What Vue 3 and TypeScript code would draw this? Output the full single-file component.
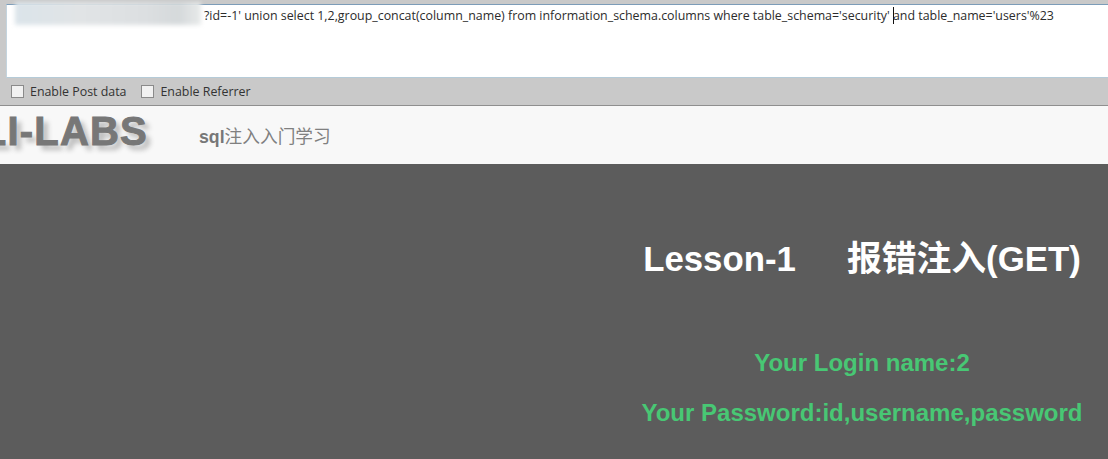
<script setup lang="ts">
const url = "?id=-1' union select 1,2,group_concat(column_name) from information_schema.columns where table_schema='security' "
const urlEnd = "and table_name='users'%23"
const options = ['Enable Post data', 'Enable Referrer']
</script>

<template>
  <div class="page">
    <div class="toolbar">
      <div class="url-box">
        <span class="url-text">{{ url }}<span class="caret"></span>{{ urlEnd }}</span>
        <div class="smudge"></div>
      </div>
      <div class="option-row">
        <label v-for="item in options" :key="item" class="option">
          <span class="check"></span>
          {{ item }}
        </label>
      </div>
    </div>
    <nav class="navbar">
      <div class="logo-clip"><span class="logo">SQLI-LABS</span></div>
      <div class="nav-title"><b>sql</b>注入入门学习</div>
    </nav>
    <main class="content">
      <section class="lesson">
        <h1>Lesson-1<span class="title-gap"></span>报错注入(GET)</h1>
        <p class="login-line">Your Login name:2</p>
        <p class="pass-line">Your Password:id,username,password</p>
      </section>
    </main>
  </div>
</template>

<style scoped>
.page {
  display: flex;
  flex-direction: column;
  width: 1108px;
  height: 459px;
  overflow: hidden;
  background: #5c5c5c;
  font-family: "Liberation Sans", "Noto Sans CJK SC", sans-serif;
}

.toolbar {
  height: 106px;
  padding-top: 4px;
  box-sizing: border-box;
  background: #c9c9c9;
  border-bottom: 1px solid #8f8f8f;
}

.url-box {
  position: relative;
  height: 74px;
  margin-left: 6px;
  padding: 1px 0 0 197px;
  box-sizing: border-box;
  background: #fff;
  border-top: 1px solid #7c9cb8;
  border-bottom: 1px solid #b5cbd8;
  border-left: 1px solid #c4d4de;
}

.url-text {
  font-family: "Open Sans", sans-serif;
  font-size: 12.4px;
  line-height: 18px;
  color: #2c2c2c;
  white-space: pre;
}

.caret {
  display: inline-block;
  width: 1px;
  height: 17px;
  margin-right: -1px;
  vertical-align: -4px;
  background: #111;
}

.smudge {
  position: absolute;
  top: -3px;
  left: 8px;
  width: 186px;
  height: 23px;
  background: linear-gradient(90deg, #dbe4ea 0%, #e1e4e6 35%, #dcdfe1 70%, #d5d9db 88%, #e8eaea 100%);
  filter: blur(2px);
}

.option-row {
  display: flex;
  gap: 15px;
  height: 27px;
  padding-left: 11px;
  align-items: center;
}

.option {
  display: flex;
  align-items: center;
  gap: 6px;
  font-family: "Open Sans", sans-serif;
  font-size: 12.4px;
  color: #333;
}

.check {
  width: 11px;
  height: 11px;
  background: #f1f1f1;
  border: 1px solid #8a8a8a;
}

.navbar {
  display: flex;
  align-items: center;
  height: 58px;
  background: #f8f8f8;
  overflow: hidden;
}

.logo-clip {
  display: flex;
  justify-content: flex-end;
  width: 149px;
  height: 58px;
  padding-right: 1px;
  box-sizing: border-box;
  line-height: 50px;
}

.logo {
  font-size: 40px;
  font-weight: 700;
  letter-spacing: 1.2px;
  color: #777;
  white-space: nowrap;
  -webkit-text-stroke: 1px #777;
  text-shadow: 5px 5px 5px #bbb;
}

.nav-title {
  margin-left: 50px;
  font-size: 17.7px;
  color: #808080;
}

.nav-title b {
  color: #777;
}

.content {
  display: flex;
  flex: 1;
  justify-content: flex-end;
}

.lesson {
  width: 492px;
  padding-top: 75px;
  text-align: center;
}

.lesson h1 {
  margin: 0;
  font-size: 34.8px;
  line-height: 40px;
  font-weight: 700;
  color: #fff;
}

.title-gap {
  display: inline-block;
  width: 51px;
}

.lesson p {
  margin: 0;
  font-size: 24px;
  line-height: 28px;
  font-weight: 700;
  color: #48c774;
}

.login-line {
  padding-top: 70px;
}

.pass-line {
  padding-top: 22px;
}
</style>

<style>
html,
body {
  margin: 0;
  background: #5c5c5c;
}
</style>
